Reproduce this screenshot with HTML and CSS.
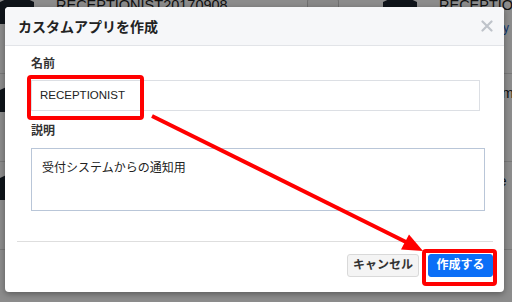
FILE: index.html
```html
<!DOCTYPE html>
<html lang="ja">
<head>
  <meta charset="UTF-8">
  <title>カスタムアプリを作成</title>
  <link rel="stylesheet" href="styles.css">
</head>
<body>
  <!-- 背景のアプリ一覧（モーダルの下に隠れる部分は省略） -->
  <div class="page">
    <div class="col">
      <div class="card">
        <svg class="card-icon" width="34" height="34" viewBox="0 0 34 34"><path d="M17 0 L34 8 L34 30 L0 30 L0 8 Z" fill="#1d2530"/></svg>
        <div class="card-body">
          <div class="card-title">RECEPTIONIST20170908</div>
        </div>
        <span class="card-btn"></span>
      </div>
      <div class="card">
        <svg class="card-icon" width="34" height="34" viewBox="0 0 34 34"><path d="M17 0 L34 8 L34 30 L0 30 L0 8 Z" fill="#1d2530"/></svg>
      </div>
      <div class="card">
        <svg class="card-icon" width="34" height="34" viewBox="0 0 34 34"><path d="M17 0 L34 8 L34 30 L0 30 L0 8 Z" fill="#1d2530"/></svg>
      </div>
    </div>
    <div class="col">
      <div class="card">
        <svg class="card-icon" width="34" height="34" viewBox="0 0 34 34"><path d="M17 0 L34 8 L34 30 L0 30 L0 8 Z" fill="#1d2530"/></svg>
        <div class="card-body">
          <div class="card-title">RECEPTIONIST20170907</div>
          <div class="card-sub">yokoyama.yy</div>
        </div>
      </div>
      <div class="card">
        <svg class="card-icon" width="34" height="34" viewBox="0 0 34 34"><path d="M17 0 L34 8 L34 30 L0 30 L0 8 Z" fill="#1d2530"/></svg>
        <div class="card-body">
          <div class="card-title">TestSystem</div>
          <div class="card-sub">kato.kato</div>
        </div>
      </div>
      <div class="card">
        <svg class="card-icon" width="34" height="34" viewBox="0 0 34 34"><path d="M17 0 L34 8 L34 30 L0 30 L0 8 Z" fill="#1d2530"/></svg>
        <div class="card-body">
          <div class="card-title">MailNotice</div>
          <div class="card-sub">kato.kato</div>
        </div>
      </div>
    </div>
  </div>

  <div class="backdrop"></div>

  <div class="modal">
    <div class="modal-header">
      <span class="modal-title">カスタムアプリを作成</span>
      <svg class="modal-close" width="12" height="12" viewBox="0 0 12 12"><path d="M1.5 1.5 L10.5 10.5 M10.5 1.5 L1.5 10.5" stroke="#bfc3ca" stroke-width="2.2" stroke-linecap="round"/></svg>
    </div>
    <div class="modal-body">
      <label class="field-label">名前</label>
      <div class="field-input">RECEPTIONIST</div>
      <label class="field-label second">説明</label>
      <div class="field-area">受付システムからの通知用</div>
    </div>
    <hr class="modal-rule">
    <div class="modal-footer">
      <button class="btn btn-cancel">キャンセル</button>
      <button class="btn btn-primary">作成する</button>
    </div>
  </div>

  <!-- 注釈（赤枠と矢印） -->
  <svg class="annot" width="512" height="302" viewBox="0 0 512 302">
    <rect x="29" y="77" width="113" height="41" rx="2" fill="none" stroke="#f00" stroke-width="4"/>
    <rect x="424" y="251" width="71" height="33" rx="2" fill="none" stroke="#f00" stroke-width="4"/>
    <line x1="152" y1="116" x2="408" y2="243" stroke="#f00" stroke-width="4"/>
    <polygon points="423,251 401,249.5 409,234.5" fill="#f00"/>
  </svg>
</body>
</html>
```

FILE: styles.css
```css
html, body {
  margin: 0;
  padding: 0;
}
body {
  width: 512px;
  height: 302px;
  overflow: hidden;
  position: relative;
  background: #fff;
  font-family: "Liberation Sans", "Noto Sans CJK JP", sans-serif;
  color: #333;
}

/* background list */
.page {
  display: grid;
  grid-template-columns: 383px 129px;
  margin-top: -14px;
  overflow: hidden;
}
.col {
  display: flex;
  flex-direction: column;
  min-width: 0;
}
.card {
  display: flex;
  gap: 22px;
  height: 88px;
  padding-top: 8px;
  box-sizing: border-box;
  border-bottom: 1px solid #ddd;
  align-items: flex-start;
}
.card-icon {
  flex: none;
}
.card-body {
  flex: 1;
  min-width: 0;
  padding-top: 2px;
  white-space: nowrap;
}
.card-title {
  font-size: 14.5px;
  line-height: 18px;
  color: #222;
}
.card-sub {
  font-size: 12px;
  line-height: 16px;
  color: #1a5fc4;
  margin-top: 6px;
}
.card-btn {
  width: 30px;
  height: 22px;
  margin: 4px 44px 0 0;
  border: 1px solid #ccc;
  border-radius: 3px;
  background: #f7f7f7;
}

.backdrop {
  position: absolute;
  inset: 0;
  background: rgba(0, 0, 0, .45);
}

/* modal */
.modal {
  position: absolute;
  left: 5px;
  top: 7px;
  width: 499px;
  height: 285px;
  background: #fff;
  border-radius: 4px;
  box-shadow: 0 2px 6px rgba(0, 0, 0, .35);
  display: flex;
  flex-direction: column;
  overflow: hidden;
}
.modal-header {
  height: 39px;
  box-sizing: border-box;
  background: #f6f7f9;
  border-bottom: 1px solid #e2e4e8;
  display: flex;
  align-items: center;
  justify-content: space-between;
  padding: 0 11px 0 13px;
}
.modal-title {
  font-size: 14px;
  font-weight: bold;
  color: #222;
}
.modal-body {
  padding: 10px 19px 0 26px;
  display: flex;
  flex-direction: column;
}
.field-label {
  font-size: 12px;
  line-height: 16px;
  font-weight: bold;
  color: #333;
}
.field-label.second {
  margin-top: 12px;
}
.field-input {
  margin-top: 8px;
  margin-right: 5px;
  height: 31px;
  box-sizing: border-box;
  border: 1px solid #dcdfe4;
  padding: 0 8px;
  font-size: 11.5px;
  line-height: 29px;
  color: #222;
}
.field-area {
  margin-top: 9px;
  height: 63px;
  box-sizing: border-box;
  border: 1px solid #b9c6d8;
  padding: 11px 10px;
  font-size: 12px;
  line-height: 16px;
  color: #222;
}
.modal-rule {
  margin: 30px 11px 0 12px;
  border: 0;
  border-top: 1px solid #dedede;
  height: 0;
}
.modal-footer {
  display: flex;
  justify-content: flex-end;
  gap: 9px;
  padding: 12px 11px 0 0;
}
.btn {
  height: 23px;
  box-sizing: border-box;
  border-radius: 3px;
  font-family: "Liberation Sans", "Noto Sans CJK JP", sans-serif;
  font-size: 12px;
  font-weight: bold;
  padding: 0;
  line-height: 21px;
}
.btn-cancel {
  width: 72px;
  background: #f4f4f4;
  border: 1px solid #d9d9d9;
  color: #333;
}
.btn-primary {
  width: 65px;
  background: #0b6ff7;
  border: 1px solid #0b6ff7;
  color: #fff;
}

.annot {
  position: absolute;
  left: 0;
  top: 0;
}
```
